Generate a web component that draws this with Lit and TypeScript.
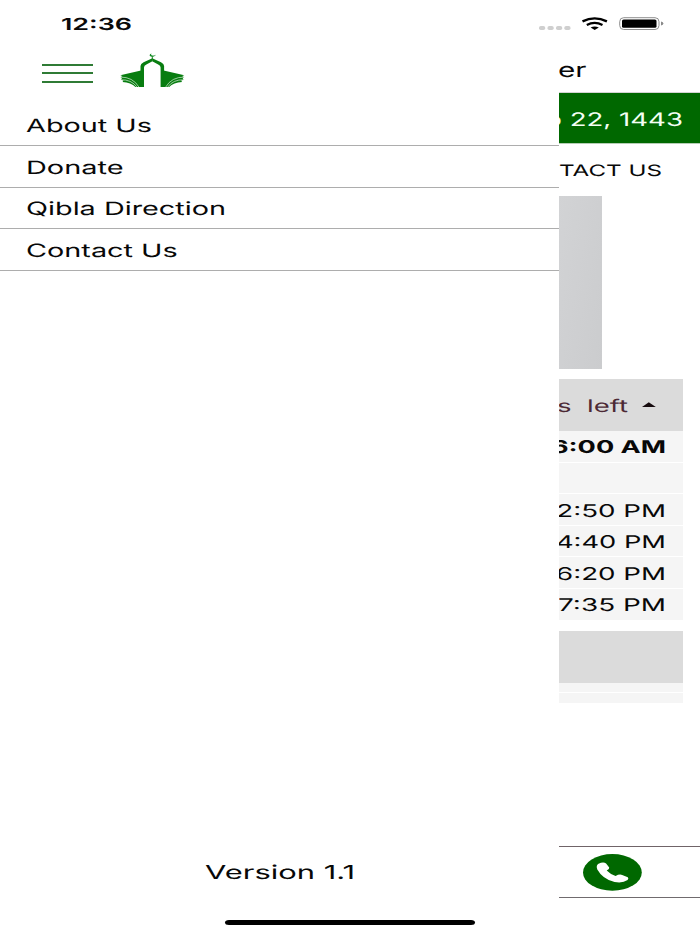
import { LitElement, html, svg, css } from "lit";
import { customElement, property } from "lit/decorators.js";

@customElement("wide-text")
class WideText extends LitElement {
  @property() text = "";
  @property({ type: Number }) width = 100;
  @property({ type: Number }) size = 18.4;
  @property({ type: Number }) weight = 400;

  static styles = css`
    :host { display: block; flex: none; }
    svg { display: block; overflow: visible; }
    text { font-family: Inter, "Liberation Sans", sans-serif; fill: currentColor; text-rendering: geometricPrecision; white-space: pre; }
  `;

  render() {
    return html`<svg width=${this.width} height="20">
      ${svg`<text x="0" y="16" font-size=${this.size} font-weight=${this.weight}
        textLength=${this.width} lengthAdjust="spacingAndGlyphs">${this.text}</text>`}
    </svg>`;
  }
}

@customElement("status-bar")
class StatusBar extends LitElement {
  static styles = css`
    :host { display: flex; height: 48px; box-sizing: border-box; padding: 14px 36px 0 60.5px; justify-content: space-between; color: #0a0a0a; }
    svg { display: block; }
  `;
  render() {
    return html`
      <wide-text text="12:36" width="71" size="16.6" weight="600"></wide-text>
      <svg width="126" height="20" viewBox="538 14 126 20">
        <g fill="#cfcfcf">
          <rect x="539" y="26" width="6.2" height="4" rx="1.8" />
          <rect x="547.5" y="26" width="6.2" height="4" rx="1.8" />
          <rect x="556" y="26" width="6.2" height="4" rx="1.8" />
          <rect x="564.3" y="26" width="6.2" height="4" rx="1.8" />
        </g>
        <g fill="none" stroke="#000" stroke-width="2.3">
          <path d="M582.5 21.4Q594.6 15.4 606.9 21.4" />
          <path d="M586.8 25Q594.6 20.8 602.5 25" />
        </g>
        <path d="M590.6 27.6Q594.6 25.2 598.8 27.6L594.7 30Z" />
        <rect x="619.7" y="17.7" width="39.3" height="11.8" rx="4" fill="none" stroke="#8f8f8f" />
        <rect x="622" y="19.5" width="34.5" height="8.3" rx="1.6" />
        <path d="M661 21.5Q663.4 22 663.4 23.6T661 25.6Z" fill="#8a8a8a" />
      </svg>
    `;
  }
}

@customElement("mosque-logo")
class MosqueLogo extends LitElement {
  static styles = css`:host, svg { display: block; }`;
  render() {
    return html`<svg width="66" height="38" viewBox="119 51 66 38">
      ${[false, true].map((flip) => svg`
        <g transform=${flip ? "translate(304.6 0) scale(-1 1)" : ""} fill="#087d10">
          <path d="M152.4 58.2L143.6 62.2Q140.5 63.6 140.5 66V87H144V67.6Q144 65.6 146.4 64.6L152.4 61.2Z" />
          <path d="M120.3 75.2L141 70.4V87H135.5Q131 82.4 122.6 82L123.4 80.6L121 79.8L122 78L120.5 77.2L122.5 76Z" />
          <path d="M120 77.1Q133 76.8 139 87.2" fill="none" stroke="#e6f5e6" stroke-width=".65" />
          <path d="M120.5 79.8Q131.5 79.3 137 87.2" fill="none" stroke="#e6f5e6" stroke-width=".65" />
        </g>`)}
      <path d="M151.2 53.8Q148.6 55 150.6 56.3Q153 57.3 155.5 55.3Q153.6 56.2 151.8 55.6Q150.2 54.8 151.2 53.8Z" fill="#07851a" stroke="#07851a" stroke-width=".3" />
      <path d="M152.3 56.5V59.5" stroke="#087d10" stroke-width=".9" />
    </svg>`;
  }
}

@customElement("app-drawer")
class AppDrawer extends LitElement {
  private items = [
    { label: "About Us", width: 126, inset: 26 },
    { label: "Donate", width: 97.5, inset: 25.8 },
    { label: "Qibla Direction", width: 200, inset: 26 },
    { label: "Contact Us", width: 151.7, inset: 26.2 },
  ];
  static styles = css`
    :host { display: flex; flex-direction: column; width: 559px; flex: none; color: #080808; }
    .top { display: flex; height: 56.4px; padding: 3px 0 0 42px; box-sizing: border-box; gap: 26px; }
    .burger { display: flex; flex-direction: column; gap: 6.35px; padding-top: 13px; width: 51px; }
    .burger i { height: 2px; background: #2f7b35; }
    .item { height: 41.67px; box-sizing: border-box; border-bottom: 1px solid #adadad; padding-top: 11.6px; display: flex; }
    .version { margin-top: auto; padding: 0 0 51.5px 204.7px; }
  `;
  render() {
    return html`
      <div class="top"><div class="burger"><i></i><i></i><i></i></div><mosque-logo></mosque-logo></div>
      ${this.items.map((i) => html`<div class="item" style="padding-left:${i.inset}px">
        <wide-text text=${i.label} width=${i.width}></wide-text></div>`)}
      <div class="version"><wide-text text="Version 1.1" width="150" size="19.2"></wide-text></div>
    `;
  }
}

@customElement("prayer-page")
class PrayerPage extends LitElement {
  private times = [
    { t: "6:00 AM", w: 115, bold: true },
    { t: "", w: 0 },
    { t: "12:50 PM", w: 121 },
    { t: "4:40 PM", w: 110 },
    { t: "6:20 PM", w: 110 },
    { t: "7:35 PM", w: 108 },
  ];
  static styles = css`
    :host { display: flex; flex-direction: column; flex: 1; min-width: 0; overflow: hidden; color: #080808; }
    .line { display: flex; justify-content: flex-end; box-sizing: border-box; flex: none; }
    .title { height: 44px; padding: 12.6px 114px 0 0; }
    .date { height: 52.4px; padding: 17px 17px 0 0; background: #006800; color: #f4fff4; border-top: 1px solid #d4d4d4; border-bottom: 1px solid #b5cdb5; }
    .contact { height: 51.6px; padding: 15.6px 38px 0 0; }
    .photo { height: 173px; width: 43px; flex: none; background: linear-gradient(100deg, #d2d3d5, #cbccce); }
    .card { margin: 10px 17.3px 0 0; flex: none; }
    .head { height: 52px; padding: 17px 27px 0 0; background: #dbdbdb; color: #4c2935; gap: 14px; }
    .head svg { display: block; flex: none; margin-top: 5.5px; }
    .row { height: 31.6px; padding: 6.5px 16.3px 0 0; background: #f5f5f5; border-bottom: 1px solid #fff; }
    .thin { height: 9.6px; background: #f5f5f5; border-bottom: 1px solid #fff; }
    .call { margin-top: auto; margin-bottom: 36px; height: 52px; box-sizing: border-box; border-top: 1.4px solid #706468; border-bottom: 1.4px solid #706b6e; padding: 6.5px 0 0 24px; flex: none; }
    .call svg { display: block; }
  `;
  render() {
    return html`
      <div class="line title"><wide-text text="er" width="28.5" size="20.3"></wide-text></div>
      <div class="line date"><wide-text text="b 22, 1443" width="138" size="18.7"></wide-text></div>
      <div class="line contact"><wide-text text="TACT US" width="103" size="15.7"></wide-text></div>
      <div class="photo"></div>
      <div class="card">
        <div class="line head">
          <wide-text text="s  left" width="71" size="17.4"></wide-text>
          <svg width="14" height="7"><path d="M0 6L6.8 1.2L13.8 6Z" fill="#160b0e" /></svg>
        </div>
        ${this.times.map((r) => html`<div class="line row">${r.t
          ? html`<wide-text text=${r.t} width=${r.w} size="17.6" weight=${r.bold ? 700 : 400}></wide-text>` : ""}</div>`)}
      </div>
      <div class="card">
        <div class="line head"></div>
        <div class="thin"></div>
        <div class="thin"></div>
      </div>
      <div class="call">
        <svg width="59" height="38" viewBox="0 0 59 38">
          <ellipse cx="29.4" cy="18.4" rx="29.4" ry="18.3" fill="#006800" />
          <path d="M15.5 9.8Q20.5 7.3 23.1 9.6L26.2 13.5Q26.7 15 23.7 16.6Q27.2 20.3 32.6 22Q36.2 20 39.2 20.9L44.8 23.2Q46 24.3 44.6 26Q39.6 29.6 31.6 28Q19.6 25 14.3 15.4Q12.7 11.5 15.5 9.8Z" fill="#fff" />
        </svg>
      </div>
    `;
  }
}

@customElement("app-root")
class AppRoot extends LitElement {
  static styles = css`
    :host { display: flex; flex-direction: column; position: relative; width: 700px; height: 934px; overflow: hidden; background: #fff; }
    .body { display: flex; flex: 1; min-height: 0; }
    .home { position: absolute; left: 225px; bottom: 9px; width: 250px; height: 5px; border-radius: 4px / 2.5px; background: #000; }
  `;
  render() {
    return html`
      <status-bar></status-bar>
      <div class="body"><app-drawer></app-drawer><prayer-page></prayer-page></div>
      <div class="home"></div>
    `;
  }
}
